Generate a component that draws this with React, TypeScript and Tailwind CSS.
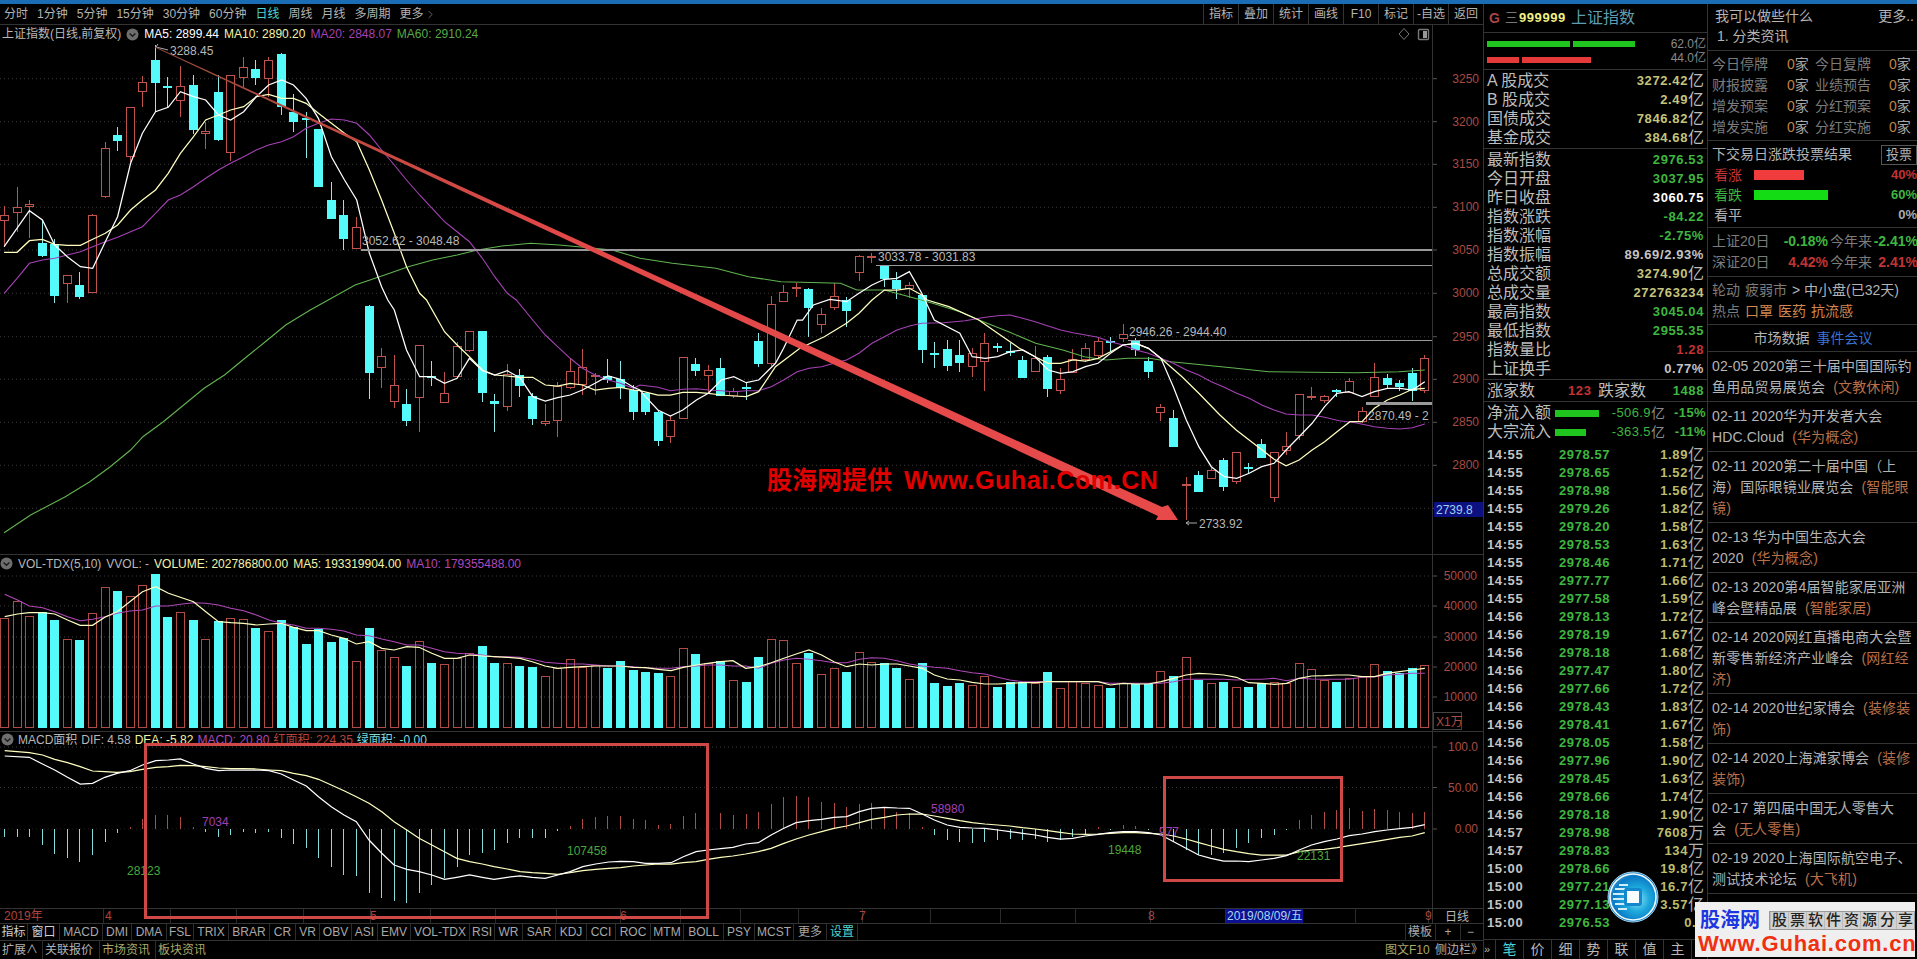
import React from 'react';
import { ChevronRight } from 'lucide-react';

// helper: turn points read from zoomed crops into page coordinates
const pts = (x0: number, sx: number, y0: number, raw: string) =>
  raw
    .trim()
    .split(/\s+/)
    .map((p) => {
      const [x, y] = p.split(',').map(Number);
      return `${(x0 + x / sx).toFixed(1)},${(y0 + y / 3).toFixed(1)}`;
    })
    .join(' ');
const z1 = (s: string) => pts(0, 2.45, 0, s);
const z8 = (s: string) => pts(0, 2.45, 300, s);
const z2 = (s: string) => pts(640, 1.845, 0, s);
const z7 = (s: string) => pts(640, 1.845, 300, s);
const z5 = (s: string) => pts(0, 2.119, 540, s);
const z6 = (s: string) => pts(740, 2.119, 540, s);

const MA5 = [
  z1('10,740 72,632 104,660 134,735 165,770 197,800 227,805 258,725 288,650 320,490 349,400 381,335 412,322 442,275 474,290 504,300 535,345 565,360 597,335 628,290 658,255 690,240 719,255 750,295 780,355 812,470 844,540 874,600 905,760 935,860'),
  z8('950,0 966,30 996,150 1028,230 1059,230 1089,250 1120,235 1150,175 1182,212 1212,225 1243,212 1275,235 1305,290 1336,303 1366,293 1397,285 1427,270 1458,250 1490,228 1520,238 1552,262'),
  z7('0,270 10,290 33,330 56,348 79,330 104,300 126,280 150,240 173,230 196,248 219,240 250,190 265,145 290,60'),
  z2('300,960 320,915 350,898 381,905 404,880 428,855 451,838 474,835 497,815 520,880'),
  z7('543,60 590,100 613,170 637,175 660,170 683,155 706,150 729,170 753,210 776,220 799,215 822,200 845,190 868,160 891,135 915,130 938,145 961,175 984,260 1008,360 1031,440 1054,500 1078,530 1101,535 1124,520 1147,500 1170,490 1192,450 1216,410 1240,370 1263,320 1286,280 1308,275 1332,290 1355,275 1379,265 1402,265 1425,270 1448,245'),
].join(' ');

const MA10 = [
  z1('10,757 42,757 72,722 104,718 134,733 165,736 197,736 227,718 258,700 288,675 320,630 349,600 381,570 412,520 442,460 474,410 504,360 535,345 565,330 597,320 628,290 658,283 690,295 719,295 750,310 780,340 812,370 844,400 874,425 905,510 935,600 966,700 996,800 1028,880'),
  z8('1045,0 1089,95 1120,135 1150,170 1182,210 1212,225 1243,228 1275,232 1305,232 1336,255 1366,258 1397,250 1427,255 1458,270 1490,265 1520,262 1552,270'),
  z7('0,272 33,285 56,285 79,277 104,277 126,280 150,285 173,288 196,290 219,275 250,200 295,145 340,110 381,70 404,40 428,0'),
  z2('451,870 474,870 497,865 520,885'),
  z7('530,0 570,20 625,60 660,100 700,145 729,170 753,190 776,190 799,180 822,183 845,175 868,155 891,135 915,130 938,145 961,175 1000,230 1031,280 1070,345 1100,390 1140,440 1170,478 1192,497 1216,480 1240,450 1263,425 1290,390 1310,365 1332,365 1355,325 1379,300 1402,285 1425,268 1448,265'),
].join(' ');

const MA20 = [
  z1('10,880 42,835 72,790 104,780 134,775 165,765 197,755 227,740 258,725 288,712 320,695 349,680 381,640 412,600 442,585 474,560 504,535 535,510 565,490 597,470 628,450 658,435 690,425 719,410 750,385 780,370 812,357 844,360 874,370 905,405 935,450 966,495 996,540 1028,585 1059,625 1089,665 1120,695 1150,725 1182,775 1212,830 1243,880'),
  z8('1265,0 1305,60 1336,105 1366,140 1397,175 1427,205 1458,225 1490,240 1520,250 1552,265'),
  z7('0,255 33,262 56,272 79,268 104,266 126,270 150,272 173,275 196,272 219,272 242,260 265,240 290,215 312,205 335,200 358,190 381,180 404,160 428,130 451,110 474,90 497,78 520,70 560,68 600,62 637,52 660,47 683,45 706,55 729,65 753,78 776,90 799,98 822,105 845,112 868,125 891,135 915,150 938,160 961,175 984,190 1008,210 1031,225 1054,245 1078,262 1101,280 1124,295 1147,315 1170,330 1192,342 1216,345 1240,345 1263,352 1290,362 1320,368 1355,380 1379,385 1402,387 1425,383 1448,372'),
].join(' ');

const MA60 = [
  z8('10,698 75,645 160,590 220,545 270,500 320,450 350,410 400,365 450,315 500,265 550,225 600,175 650,125 700,75 760,30'),
  z1('790,910 870,855 930,830 1000,800 1060,780 1120,765 1170,750 1230,738 1300,730 1370,735 1430,742 1500,750 1568,775'),
  z2('60,790 140,805 200,830 260,845 370,850 400,870 451,870 497,890 540,910 590,935 625,960'),
  z7('680,95 730,130 780,150 820,170 860,180 900,175 940,175 980,185 1040,195 1100,205 1160,215 1240,217 1320,218 1400,215 1448,210'),
].join(' ');

const VOL_MA5 = [
  z5('10,230 37,222 62,218 90,218 116,222 143,240 170,256 196,256 222,232 248,215 275,185 302,155 330,140 357,160 382,172 410,185 436,215 463,245 489,248 516,250 543,255 570,252 596,250 622,262 649,272 675,272 702,285 729,295 755,312 782,305 809,325 835,330 862,320 888,322 915,340 942,355 968,355 995,345 1022,348 1047,350 1075,352 1102,355 1128,365 1155,378 1182,385 1208,382 1235,380 1262,378 1290,378 1315,378 1342,382 1368,383 1395,388 1422,392 1448,382 1475,375 1500,370 1527,365 1553,362'),
  z6('12,385 39,380 66,368 93,355 119,342 146,330 173,345 199,365 226,380 253,372 279,375 306,372 333,372 359,378 386,385 412,405 439,417 466,420 492,427 519,432 546,432 572,430 599,428 626,428 652,425 679,425 705,425 732,425 759,425 785,435 812,430 839,432 865,432 892,425 919,415 945,405 972,400 998,402 1025,405 1052,412 1078,428 1105,430 1132,433 1158,430 1185,415 1211,408 1238,407 1265,405 1291,405 1318,410 1345,410 1371,400 1398,395 1424,390 1451,385'),
].join(' ');

const VOL_MA10 = [
  z5('10,163 37,180 62,198 90,203 116,215 143,230 170,242 196,238 222,230 248,220 275,213 302,210 330,198 357,198 382,193 410,188 436,190 463,195 489,205 516,212 543,225 570,240 596,250 622,255 649,265 675,265 702,268 729,273 755,285 782,287 809,297 835,305 862,315 888,315 915,325 942,335 968,340 995,342 1022,345 1047,350 1075,350 1102,352 1128,358 1155,367 1182,370 1208,372 1235,372 1262,375 1290,378 1315,378 1342,380 1368,383 1395,385 1422,385 1448,380 1475,378 1500,375 1527,375 1553,378'),
  z6('12,378 39,385 66,370 93,360 119,355 146,358 173,362 199,368 226,368 253,358 279,353 306,355 333,362 359,372 386,378 412,382 439,385 466,392 492,398 519,402 546,412 572,420 599,425 626,425 652,425 679,425 705,425 732,425 759,425 785,430 812,430 839,430 865,430 892,430 919,425 945,418 972,418 998,418 1025,418 1052,420 1078,418 1105,418 1132,415 1158,422 1185,415 1211,417 1238,418 1265,418 1291,418 1318,412 1345,410 1371,405 1398,403 1424,400 1451,400'),
].join(' ');

const DIF = [
  z5('10,648 62,652 90,672 116,690 143,712 170,732 196,730 222,712 248,700 275,692 302,675 330,662 357,660 382,657 410,672 436,685 463,692 489,690 516,690 543,690 570,692 596,702 622,720 649,738 675,770 702,800 729,825 755,845 782,900 809,940 835,975 862,988 888,995 915,1005 942,1018 968,1012 995,1005 1022,1012 1047,1018 1075,1012 1102,1008 1128,1012 1155,1015 1182,1005 1208,995 1235,980 1262,972 1290,966 1315,964 1342,965 1368,970 1395,970 1422,968 1448,950 1475,935 1500,930 1527,926 1553,922'),
  z6('12,912 39,908 66,885 93,865 119,848 146,842 173,838 199,832 226,830 253,815 279,805 306,802 333,804 359,805 386,822 412,840 439,855 466,862 492,864 519,865 546,870 572,875 599,880 626,885 652,892 679,897 705,895 732,888 759,883 785,878 812,875 839,875 865,878 892,885 919,905 945,925 972,945 998,955 1025,963 1052,963 1078,965 1105,960 1132,955 1158,947 1185,930 1211,915 1238,905 1265,897 1291,887 1318,882 1345,875 1371,870 1398,866 1424,862 1451,854'),
].join(' ');

const DEA = [
  z5('10,632 62,638 90,645 116,658 143,668 170,680 196,693 222,695 248,697 275,695 302,688 330,682 357,680 382,676 410,677 436,680 463,684 489,686 516,686 543,687 570,690 596,692 622,700 649,707 675,718 702,735 729,752 755,770 782,790 809,815 835,845 862,870 888,895 915,915 942,935 968,955 995,965 1022,972 1047,980 1075,987 1102,995 1128,998 1155,1000 1182,1003 1208,998 1235,992 1262,988 1290,985 1315,983 1342,978 1368,975 1395,972 1422,972 1448,968 1475,965 1500,958 1527,952 1553,948'),
  z6('12,942 39,935 66,925 93,910 119,897 146,885 173,875 199,865 226,858 253,848 279,838 306,832 333,825 359,822 386,822 412,828 439,835 466,842 492,848 519,852 546,855 572,858 599,863 626,867 652,872 679,877 705,882 732,883 759,882 785,880 812,878 839,878 865,880 892,882 919,888 945,897 972,908 998,918 1025,928 1052,935 1078,941 1105,945 1132,945 1158,945 1185,935 1211,930 1238,928 1265,923 1291,917 1345,905 1398,892 1424,888 1451,878'),
].join(' ');

// wick top, body top, body bottom, wick bottom, 1 = falling (cyan)
const CANDLES: number[][] = [
  [206,215,221,247,0],[187,207,213,232,0],[200,204,207,238,0],[220,243,256,257,1],[239,244,296,303,1],[275,275,284,303,0],
  [272,285,297,299,1],[214,215,293,293,0],[142,148,197,198,0],[127,135,141,151,1],[107,107,157,162,0],[76,82,92,107,0],
  [45,60,83,112,1],[77,86,87,108,1],[66,86,101,117,0],[75,85,130,134,1],[122,131,134,149,0],[75,92,140,141,1],
  [75,75,153,161,0],[57,67,78,87,0],[60,69,78,85,1],[57,60,79,97,0],[53,54,107,115,1],[94,112,122,132,1],
  [112,118,119,158,1],[129,129,187,187,1],[182,200,219,219,1],[200,215,239,250,1],[217,227,249,249,0],[305,306,373,399,1],
  [348,356,368,388,0],[355,385,402,408,0],[389,404,421,426,1],[345,345,398,432,0],[361,376,377,386,1],[372,393,403,403,0],
  [342,346,377,378,0],[331,331,351,352,0],[331,331,393,402,1],[394,401,404,432,1],[364,374,407,411,0],[369,375,386,397,1],
  [393,396,419,425,1],[404,421,424,426,0],[382,386,421,437,0],[358,371,388,389,0],[349,367,385,395,0],[373,375,377,395,0],
  [359,376,380,383,1],[361,379,388,399,1],[385,390,412,420,1],[393,393,412,415,1],[410,412,441,446,1],[416,420,437,443,0],
  [357,357,419,419,0],[358,364,371,376,1],[365,370,376,392,0],[358,368,396,396,1],[388,391,396,398,0],[382,387,388,400,1],
  [333,341,364,367,1],[296,304,364,366,0],[285,292,302,302,0],[283,287,289,297,0],[288,289,308,337,1],[308,314,325,333,0],
  [283,296,308,310,0],[297,300,311,327,1],[255,256,273,281,0],[253,256,258,263,0],[265,266,279,287,1],[272,280,289,299,1],
  [282,285,289,298,0],[295,295,350,363,1],[342,353,354,368,1],[340,349,366,371,1],[340,355,363,372,1],[348,353,367,377,0],
  [333,343,362,391,0],[343,346,347,352,1],[343,351,352,356,1],[356,360,378,378,1],[346,358,372,372,0],[355,357,389,397,1],
  [368,379,391,394,0],[349,359,373,373,0],[343,348,360,362,0],[337,341,356,358,0],[337,341,343,352,1],[324,334,339,342,0],
  [338,341,350,356,1],[357,361,372,378,1],[404,407,413,421,0],[410,418,447,447,1],[477,484,486,520,0],[471,475,492,492,1],
  [468,470,479,479,0],[458,460,487,491,1],[452,452,482,484,0],[463,467,468,473,1],[439,444,458,458,1],[452,452,498,502,0],
  [432,446,451,455,0],[394,394,436,440,0],[387,396,398,400,0],[395,396,401,403,0],[389,390,392,397,1],[378,381,393,393,0],
  [407,411,422,423,0],[363,377,397,397,0],[374,378,385,388,1],[380,383,387,391,1],[368,373,391,401,1],[355,358,391,393,0],
];

const VOL_TOPS = [
  235,183,228,215,240,298,300,220,140,153,168,135,102,232,217,240,298,243,235,238,264,273,240,262,312,267,305,294,362,264,
  330,352,378,303,369,373,355,338,318,369,370,378,380,408,385,358,380,375,384,363,390,396,400,408,325,342,370,363,420,
  426,351,298,300,370,338,403,385,396,335,367,370,384,418,370,429,438,429,436,408,440,427,427,430,396,445,423,430,436,443,
  430,433,433,393,408,352,420,428,427,442,441,430,425,430,368,388,420,426,415,407,373,394,398,385,376,
];

const MACD_ENDS = [
  890,890,890,915,943,955,967,945,905,878,860,838,824,825,832,860,875,890,885,875,878,875,895,912,925,955,982,1005,1008,1060,
  1075,1083,1090,1060,1035,1015,980,945,940,930,910,895,895,893,872,858,838,830,828,828,836,840,855,853,828,820,866,820,825,
  822,815,792,772,768,772,785,788,800,793,790,805,815,818,862,885,900,905,908,905,900,897,900,897,905,900,890,885,862,870,
  855,858,870,862,905,930,945,945,940,925,910,895,885,870,840,825,815,810,805,812,808,810,815,820,815,
];

const barX = (i: number) => Math.round(4 + 12.57 * i);

const PRICE_GRID = [
  [3250, 78.7], [3200, 121.7], [3150, 164.3], [3100, 207.3], [3050, 250], [3000, 293.3],
  [2950, 336.7], [2900, 379.3], [2850, 422.3], [2800, 465.3], [2750, 508.3],
];
const VOL_GRID = [[50000, 576], [40000, 606], [30000, 637], [20000, 667], [10000, 697]];

const CandleChart = () => (
  <svg className="absolute inset-0 w-[1483px] h-[529px]" viewBox="0 25 1483 529" fontFamily="'Liberation Sans', sans-serif">
    <defs>
      <linearGradient id="arrowFade" gradientUnits="userSpaceOnUse" x1="155" y1="47" x2="1178" y2="520">
        <stop offset="0" stopColor="#8f4a3c" />
        <stop offset="0.15" stopColor="#bb4a40" />
        <stop offset="0.4" stopColor="#e24848" />
        <stop offset="1" stopColor="#e84a4a" />
      </linearGradient>
    </defs>
    {PRICE_GRID.map(([p, y]) => (
      <g key={p}>
        <line x1="0" x2="1432" y1={y} y2={y} stroke="#3a3a3a" strokeDasharray="1 3" />
        <line x1="1432" x2="1437" y1={y} y2={y} stroke="#555" />
        {p !== 2750 && (
          <text x="1479" y={y + 4} textAnchor="end" fontSize="12" fill="#a84c44">{p}</text>
        )}
      </g>
    ))}
    <line x1="1432.5" x2="1432.5" y1="25" y2="554" stroke="#333" />

    {CANDLES.map((c, i) => {
      const x = barX(i);
      const color = c[4] ? '#55fbfb' : '#c0544c';
      return (
        <g key={i} shapeRendering="crispEdges">
          <line x1={x + 0.5} x2={x + 0.5} y1={c[0]} y2={c[3]} stroke={c[4] ? '#8fe8e8' : color} />
          {c[4] ? (
            <rect x={x - 4} y={c[1]} width="9" height={Math.max(c[2] - c[1], 2)} fill={color} />
          ) : (
            <rect x={x - 3.5} y={c[1] + 0.5} width="8" height={Math.max(c[2] - c[1] - 1, 1)} fill="#000" stroke={color} />
          )}
        </g>
      );
    })}

    <polyline points={MA60} fill="none" stroke="#62b450" strokeWidth="1.1" />
    <polyline points={MA20} fill="none" stroke="#a542b5" strokeWidth="1.1" />
    <polyline points={MA10} fill="none" stroke="#ffffc0" strokeWidth="1.25" />
    <polyline points={MA5} fill="none" stroke="#ffffff" strokeWidth="1.25" />

    <rect x="361" y="249" width="1071" height="2" fill="#999" />
    <rect x="876" y="265" width="556" height="1" fill="#999" />
    <rect x="1128" y="340" width="304" height="1" fill="#999" />
    <rect x="1366" y="402" width="66" height="3" fill="#999" />

    <text x="170" y="55" fontSize="12" fill="#b8b8b8">3288.45</text>
    <path d="M168 50 L156 47 M156 47 l2 -3" stroke="#aaa" fill="none" />
    <text x="362" y="245" fontSize="12" fill="#b8b8b8">3052.62 - 3048.48</text>
    <text x="878" y="261" fontSize="12" fill="#b8b8b8">3033.78 - 3031.83</text>
    <text x="1129" y="336" fontSize="12" fill="#b8b8b8">2946.26 - 2944.40</text>
    <text x="1368" y="420" fontSize="12" fill="#b8b8b8">2870.49 - 2</text>
    <text x="1199" y="528" fontSize="12" fill="#b8b8b8">2733.92</text>
    <path d="M1197 523 H1186 M1186 523 l3 -2 M1186 523 l3 2" stroke="#aaa" fill="none" />

    <polygon
      points="155,46.6 1162,507 1168,505 1178,520 1156,520 1158,516 155,47.6"
      fill="url(#arrowFade)"
    />

    <rect x="1434" y="502" width="49" height="15" fill="#0d1080" />
    <text x="1436" y="514" fontSize="12" fill="#9fd0ef">2739.8</text>

    <path d="M1404 28.5 L1409 34 L1404 39.5 L1399 34 Z" fill="none" stroke="#777" />
    <rect x="1418.5" y="29.5" width="10" height="10" rx="1" fill="none" stroke="#777" strokeWidth="1.4" />
    <rect x="1423" y="31" width="4" height="7" fill="#999" />

    <text
      x="767"
      y="489"
      fontSize="25"
      fontWeight="700"
      fill="#e00000"
      fontFamily="'Noto Sans CJK SC', sans-serif"
    >
      股海网提供
      <tspan x="904" fontSize="25" fontFamily="'Liberation Sans', sans-serif" letterSpacing="0.6">Www.Guhai.Com.CN</tspan>
    </text>
  </svg>
);

const VolumeChart = () => (
  <svg className="absolute inset-0 w-[1483px] h-[176px]" viewBox="0 555 1483 176" fontFamily="'Liberation Sans', sans-serif">
    {VOL_GRID.map(([v, y]) => (
      <g key={v}>
        <line x1="0" x2="1432" y1={y} y2={y} stroke="#3a3a3a" strokeDasharray="1 3" />
        <line x1="1432" x2="1437" y1={y} y2={y} stroke="#555" />
        <text x="1477" y={y + 4} textAnchor="end" fontSize="12" fill="#a84c44">{v}</text>
      </g>
    ))}
    <line x1="1432.5" x2="1432.5" y1="555" y2="731" stroke="#333" />
    {VOL_TOPS.map((z, i) => {
      const x = barX(i);
      const top = Math.round(540 + z / 3);
      return CANDLES[i][4] ? (
        <rect key={i} x={x - 4} y={top} width="9" height={728 - top} fill="#55fbfb" shapeRendering="crispEdges" />
      ) : (
        <rect key={i} x={x - 3.5} y={top + 0.5} width="8" height={727 - top} fill="none" stroke="#b04c44" shapeRendering="crispEdges" />
      );
    })}
    <polyline points={VOL_MA10} fill="none" stroke="#b048b8" strokeWidth="1.1" />
    <polyline points={VOL_MA5} fill="none" stroke="#ffffc0" strokeWidth="1.2" />
    <rect x="1433.5" y="712.5" width="28" height="17" fill="none" stroke="#444" />
    <text x="1436" y="726" fontSize="12" fill="#a84c44" fontFamily="'Liberation Sans', 'Noto Sans CJK SC', sans-serif">X1万</text>
  </svg>
);

const MacdChart = () => (
  <svg className="absolute inset-0 w-[1483px] h-[176px]" viewBox="0 732 1483 176" fontFamily="'Liberation Sans', sans-serif">
    {[[747, '100.0'], [787.5, '50.00'], [829, '0.00']].map(([y, label]) => (
      <g key={label as string}>
        <line x1="0" x2="1432" y1={y as number} y2={y as number} stroke={label === '50.00' || label === '100.0' ? '#3a3a3a' : '#1c1c1c'} strokeDasharray="1 3" />
        <line x1="1432" x2="1437" y1={y as number} y2={y as number} stroke="#555" />
        <text x="1478" y={(y as number) + 4} textAnchor="end" fontSize="12" fill="#a84c44">{label}</text>
      </g>
    ))}
    <line x1="1432.5" x2="1432.5" y1="732" y2="908" stroke="#333" />
    {MACD_ENDS.map((z, i) => {
      const x = barX(i) + 0.5;
      const y = 540 + z / 3;
      return <line key={i} x1={x} x2={x} y1="828.7" y2={y} stroke={z < 866 ? '#b04c44' : '#86dcdc'} shapeRendering="crispEdges" />;
    })}
    <polyline points={DEA} fill="none" stroke="#ffffc0" strokeWidth="1.25" />
    <polyline points={DIF} fill="none" stroke="#ffffff" strokeWidth="1.25" />
    <text x="127" y="875" fontSize="12" fill="#4aa63c">28123</text>
    <text x="202" y="826" fontSize="12" fill="#a040b0">7034</text>
    <text x="567" y="855" fontSize="12" fill="#4aa63c">107458</text>
    <text x="931" y="813" fontSize="12" fill="#a040b0">58980</text>
    <text x="1108" y="854" fontSize="12" fill="#4aa63c">19448</text>
    <text x="1297" y="860" fontSize="12" fill="#4aa63c">22131</text>
    <text x="1159" y="836" fontSize="12" fill="#a040b0">977</text>
  </svg>
);

const DateAxis = () => (
  <svg className="absolute inset-0 w-[1483px] h-[14px]" viewBox="0 909 1483 14" fontFamily="'Liberation Sans', 'Noto Sans CJK SC', sans-serif">
    {[103, 170, 236, 303, 370, 430, 495, 556, 620, 680, 740, 798, 862, 930, 1000, 1075, 1150, 1225, 1355, 1428].map((x) => (
      <line key={x} x1={x + 0.5} x2={x + 0.5} y1="909" y2="923" stroke="#2a2a2a" />
    ))}
    <line x1="1432.5" x2="1432.5" y1="909" y2="923" stroke="#333" />
    <text x="4" y="920" fontSize="12" fill="#b0443c">2019年</text>
    <text x="105" y="920" fontSize="12" fill="#b0443c">4</text>
    <text x="370" y="920" fontSize="12" fill="#b0443c">5</text>
    <text x="620" y="920" fontSize="12" fill="#b0443c">6</text>
    <text x="859" y="920" fontSize="12" fill="#b0443c">7</text>
    <text x="1148" y="920" fontSize="12" fill="#b0443c">8</text>
    <text x="1425" y="920" fontSize="12" fill="#b0443c">9</text>
    <rect x="1226" y="909" width="77" height="14" fill="#0d1090" />
    <text x="1227" y="920" fontSize="12" fill="#a8d8f0">2019/08/09/五</text>
    <text x="1445" y="921" fontSize="12" fill="#b8b8b8">日线</text>
  </svg>
);

const Chevron = () => (
  <svg width="13" height="13" viewBox="0 0 13 13" className="shrink-0">
    <circle cx="6.5" cy="6.5" r="6" fill="#6e6e6e" />
    <path d="M3.6 5.4 L6.5 8.3 L9.4 5.4" fill="none" stroke="#1c1c1c" strokeWidth="1.4" />
  </svg>
);

const TOOLBAR = ['分时', '1分钟', '5分钟', '15分钟', '30分钟', '60分钟', '日线', '周线', '月线', '多周期'];
const TOOLS = ['指标', '叠加', '统计', '画线', 'F10', '标记', '-自选', '返回'];

const Toolbar = () => (
  <div className="flex h-[21px] items-center border-b border-[#333] pl-[4px] text-[12px] text-[#b4b4b4]">
    <div className="flex items-center gap-[9px]">
      {TOOLBAR.map((t) => (
        <span key={t} className={t === '日线' ? 'text-[#4fd4d4]' : ''}>{t}</span>
      ))}
      <span className="flex items-center">更多<ChevronRight size={13} strokeWidth={1} /></span>
    </div>
    <div className="ml-auto flex h-full">
      {TOOLS.map((t) => (
        <span key={t} className="flex w-[35px] items-center justify-center border-l border-[#333]">{t}</span>
      ))}
    </div>
  </div>
);

const FORMULAS: [string, number][] = [
  ['指标', 28], ['窗口', 32], ['MACD', 43], ['DMI', 29], ['DMA', 35], ['FSL', 27], ['TRIX', 35], ['BRAR', 41], ['CR', 26],
  ['VR', 24], ['OBV', 32], ['ASI', 26], ['EMV', 33], ['VOL-TDX', 59], ['RSI', 25], ['WR', 28], ['SAR', 33], ['KDJ', 31],
  ['CCI', 29], ['ROC', 35], ['MTM', 33], ['BOLL', 40], ['PSY', 31], ['MCST', 39], ['更多', 33], ['设置', 31],
];

const FormulaTabs = () => (
  <div className="flex h-[17px] items-center border-t border-[#333] text-[12px] text-[#a8a8a8]">
    {FORMULAS.map(([t, w]) => (
      <span
        key={t}
        className={`flex h-full shrink-0 items-center justify-center border-r border-[#2c2c2c] ${
          t === '设置' ? 'text-[#4fd4d4]' : t === '指标' || t === '窗口' ? 'text-[#d0d0d0]' : ''
        }`}
        style={{ width: w }}
      >
        {t}
      </span>
    ))}
    <div className="ml-auto flex h-full items-center pr-[3px]">
      <span className="w-[30px] border-l border-[#2c2c2c] pl-[2px]">模板</span>
      <span className="w-[25px] border-l border-[#2c2c2c] text-center">+</span>
      <span className="w-[20px] border-l border-[#2c2c2c] text-center">−</span>
    </div>
  </div>
);

const BottomTabs = () => (
  <div className="flex h-[19px] items-center border-t border-[#333] pl-[2px] text-[12px] text-[#b0b0b0]">
    <span className="w-[41px] border-r border-[#2c2c2c]">扩展∧</span>
    <span className="w-[57px] pl-[2px] border-r border-[#2c2c2c]">关联报价</span>
    <span className="w-[56px] pl-[2px] border-r border-[#2c2c2c] text-[#a8a86c]">市场资讯</span>
    <span className="w-[56px] pl-[2px] text-[#a8a86c]">板块资讯</span>
    <span className="ml-auto w-[50px] text-[#a8a86c]">图文F10</span>
    <span className="w-[48px]">侧边栏》</span>
  </div>
);

const STATS1: [string, string, string][] = [
  ['A 股成交', '3272.42', '亿'],
  ['B 股成交', '2.49', '亿'],
  ['国债成交', '7846.82', '亿'],
  ['基金成交', '384.68', '亿'],
];

const GREEN = 'text-[#3fb63f]';
const PALE = 'text-[#c4c47c]';
const GRAY = 'text-[#c4c4c4]';

const STATS2: [string, string, string, string?][] = [
  ['最新指数', '2976.53', GREEN],
  ['今日开盘', '3037.95', GREEN],
  ['昨日收盘', '3060.75', 'text-white'],
  ['指数涨跌', '-84.22', GREEN],
  ['指数涨幅', '-2.75%', GREEN],
  ['指数振幅', '89.69/2.93%', GRAY],
  ['总成交额', '3274.90', PALE, '亿'],
  ['总成交量', '272763234', PALE],
  ['最高指数', '3045.04', GREEN],
  ['最低指数', '2955.35', GREEN],
  ['指数量比', '1.28', 'text-[#c03434]'],
  ['上证换手', '0.77%', GRAY],
];

const TICKS: [string, string, string, string][] = [
  ['14:55', '2978.57', '1.89', '亿'], ['14:55', '2978.65', '1.52', '亿'], ['14:55', '2978.98', '1.56', '亿'],
  ['14:55', '2979.26', '1.82', '亿'], ['14:55', '2978.20', '1.58', '亿'], ['14:55', '2978.53', '1.63', '亿'],
  ['14:55', '2978.46', '1.71', '亿'], ['14:55', '2977.77', '1.66', '亿'], ['14:55', '2977.58', '1.59', '亿'],
  ['14:56', '2978.13', '1.72', '亿'], ['14:56', '2978.19', '1.67', '亿'], ['14:56', '2978.18', '1.68', '亿'],
  ['14:56', '2977.47', '1.80', '亿'], ['14:56', '2977.66', '1.72', '亿'], ['14:56', '2978.43', '1.83', '亿'],
  ['14:56', '2978.41', '1.67', '亿'], ['14:56', '2978.05', '1.58', '亿'], ['14:56', '2977.96', '1.90', '亿'],
  ['14:56', '2978.45', '1.63', '亿'], ['14:56', '2978.66', '1.74', '亿'], ['14:56', '2978.18', '1.90', '亿'],
  ['14:57', '2978.98', '7608', '万'], ['14:57', '2978.83', '134', '万'], ['15:00', '2978.66', '19.8', '亿'],
  ['15:00', '2977.21', '16.7', '亿'], ['15:00', '2977.13', '3.57', '亿'], ['15:00', '2976.53', '0.0', ''],
];

const FOOT_TABS = ['笔', '价', '细', '势', '联', '值', '主', '筹'];

const QuotePanel = () => (
  <div className="flex w-[224px] shrink-0 flex-col border-r border-[#333]">
    <div className="flex h-[29px] items-center gap-[5px] border-b border-[#333] pl-[5px]">
      <span className="text-[14px] font-bold text-[#a84444]">G</span>
      <span className="-mr-[4px] text-[13px] text-[#777]">三</span>
      <span className="text-[13px] font-bold tracking-[0.6px] text-[#f0f084]">999999</span>
      <span className="text-[16px] text-[#5d9db3]">上证指数</span>
    </div>
    <div className="relative h-[37px] border-b border-[#333] text-[12px] text-[#8a8a8a]">
      <div className="flex h-[19px] items-center justify-between pl-[3px] pr-[1px] pt-[3px]">
        <div className="flex gap-[3px]">
          <span className="h-[6px] w-[83px] bg-[#1fc41f]" />
          <span className="h-[6px] w-[62px] bg-[#1fc41f]" />
        </div>
        <span>62.0亿</span>
      </div>
      <div className="flex h-[15px] items-center justify-between pl-[3px] pr-[1px]">
        <div className="flex gap-[3px]">
          <span className="h-[6px] w-[32px] bg-[#e63a3a]" />
          <span className="h-[6px] w-[69px] bg-[#e63a3a]" />
        </div>
        <span className="-mt-[3px]">44.0亿</span>
      </div>
    </div>
    <div className="flex h-[79px] flex-col justify-center border-b border-[#333] pl-[3px] pr-[3px]">
      {STATS1.map(([l, v, u]) => (
        <div key={l} className="flex h-[19px] items-center justify-between text-[16px] text-[#bdbdbd]">
          <span>{l}</span>
          <span className="flex items-center">
            <b className={`text-[13px] tracking-[0.6px] ${PALE}`}>{v}</b>
            <span>{u}</span>
          </span>
        </div>
      ))}
    </div>
    <div className="flex h-[231px] flex-col justify-center border-b border-[#333] pl-[3px] pr-[3px]">
      {STATS2.map(([l, v, c, u]) => (
        <div key={l} className="flex h-[19px] items-center justify-between text-[16px] text-[#bdbdbd]">
          <span>{l}</span>
          <span className="flex items-center">
            <b className={`text-[13px] tracking-[0.6px] ${c}`}>{v}</b>
            {u && <span>{u}</span>}
          </span>
        </div>
      ))}
    </div>
    <div className="flex h-[22px] items-center border-b border-[#333] pl-[3px] pr-[3px] text-[16px] text-[#bdbdbd]">
      <span className="w-[81px]">涨家数</span>
      <b className="w-[30px] text-[13px] tracking-[0.6px] text-[#c03434]">123</b>
      <span className="w-[50px]">跌家数</span>
      <b className={`flex-1 text-right text-[13px] tracking-[0.6px] ${GREEN}`}>1488</b>
    </div>
    <div className="flex h-[41px] flex-col justify-center pl-[3px] pr-[1px] text-[#bdbdbd]">
      {[['净流入额', 44, '-506.9', '-15%'], ['大宗流入', 31, '-363.5', '-11%']].map(([l, w, v, p]) => (
        <div key={l as string} className="flex h-[19px] items-center text-[16px]">
          <span className="w-[68px] shrink-0">{l}</span>
          <span className="w-[50px] shrink-0">
            <span className="block h-[7px] bg-[#1fc41f]" style={{ width: w as number }} />
          </span>
          <span className="flex w-[60px] shrink-0 items-center justify-end">
            <b className={`text-[13px] font-normal tracking-[0.4px] ${GREEN}`}>{v}</b>
            <span className="text-[14px] text-[#8a8a8a]">亿</span>
          </span>
          <b className={`flex-1 text-right text-[13px] tracking-[0.4px] ${GREEN}`}>{p}</b>
        </div>
      ))}
    </div>
    <div className="flex flex-col pl-[3px] pr-[3px] pt-[3px]">
      {TICKS.map(([t, p, v, u], i) => (
        <div key={i} className="flex h-[18px] items-center text-[13px] font-bold tracking-[0.6px]">
          <span className="w-[72px] text-[#c4c4c4]">{t}</span>
          <span className={GREEN}>{p}</span>
          <span className="ml-auto flex items-center">
            <span className="text-[#bcbc6c]">{v}</span>
            <span className="text-[16px] font-normal tracking-normal text-[#b0b0b0]">{u}</span>
          </span>
        </div>
      ))}
    </div>
    <div className="mt-auto flex h-[20px] items-center border-t border-[#333] text-[14px] text-[#b8b8b8]">
      <span className="w-[11px] shrink-0 text-[11px]">»</span>
      {FOOT_TABS.map((t, i) => (
        <span
          key={t}
          className={`flex h-full w-[28px] shrink-0 items-center justify-center border-l border-[#333] ${i === 0 ? 'text-[#4fd4d4]' : ''}`}
        >
          {t}
        </span>
      ))}
    </div>
  </div>
);

const COUNTS = [
  ['今日停牌', '今日复牌'],
  ['财报披露', '业绩预告'],
  ['增发预案', '分红预案'],
  ['增发实施', '分红实施'],
];

const NEWS: [string, string?][][] = [
  [['02-05 2020第三十届中国国际钓'], ['鱼用品贸易展览会', '(文教休闲)']],
  [['02-11 2020华为开发者大会'], ['HDC.Cloud', '(华为概念)']],
  [['02-11 2020第二十届中国（上'], ['海）国际眼镜业展览会', '(智能眼'], ['', '镜)']],
  [['02-13 华为中国生态大会'], ['2020', '(华为概念)']],
  [['02-13 2020第4届智能家居亚洲'], ['峰会暨精品展', '(智能家居)']],
  [['02-14 2020网红直播电商大会暨'], ['新零售新经济产业峰会', '(网红经'], ['', '济)']],
  [['02-14 2020世纪家博会', '(装修装'], ['', '饰)']],
  [['02-14 2020上海滩家博会', '(装修'], ['', '装饰)']],
  [['02-17 第四届中国无人零售大'], ['会', '(无人零售)']],
  [['02-19 2020上海国际航空电子、'], ['测试技术论坛', '(大飞机)']],
];

const InfoPanel = () => (
  <div className="flex w-[210px] shrink-0 flex-col text-[14px] text-[#b4b4b4]">
    <div className="h-[47px] border-b border-[#333] pl-[7px] pr-[4px]">
      <div className="flex h-[22px] items-center justify-between pt-[2px]">
        <span>我可以做些什么</span>
        <span>更多..</span>
      </div>
      <div className="flex h-[21px] items-center pl-[2px]">1. 分类资讯</div>
    </div>
    <div className="flex h-[90px] flex-col justify-center border-b border-[#333] pl-[4px]">
      {COUNTS.map(([a, b]) => (
        <div key={a} className="grid h-[21px] grid-cols-[75px_28px_74px_28px] items-center text-[#7c7c7c]">
          <span>{a}</span>
          <span className="text-[#a8a8a8]"><span className="text-[#c08040]">0</span>家</span>
          <span>{b}</span>
          <span className="text-[#a8a8a8]"><span className="text-[#c08040]">0</span>家</span>
        </div>
      ))}
    </div>
    <div className="h-[87px] border-b border-[#333] pl-[4px]">
      <div className="flex h-[24px] items-center justify-between pt-[3px]">
        <span>下交易日涨跌投票结果</span>
        <span className="mr-[1px] flex h-[20px] w-[36px] items-center justify-center border border-[#555] text-[13px]">投票</span>
      </div>
      <div className="flex h-[20px] items-center pl-[2px]">
        <span className="w-[40px] text-[#c83434]">看涨</span>
        <span className="h-[10px] w-[50px] bg-[#f03c3c]" />
        <b className="ml-auto pr-[1px] text-[13px] text-[#c03434]">40%</b>
      </div>
      <div className="flex h-[20px] items-center pl-[2px]">
        <span className="w-[40px] text-[#3fb63f]">看跌</span>
        <span className="h-[10px] w-[74px] bg-[#14dc14]" />
        <b className="ml-auto pr-[1px] text-[13px] text-[#3fb63f]">60%</b>
      </div>
      <div className="flex h-[20px] items-center pl-[2px]">
        <span className="w-[40px]">看平</span>
        <b className="ml-auto pr-[1px] text-[13px] text-[#aaa]">0%</b>
      </div>
    </div>
    <div className="flex h-[49px] flex-col justify-center border-b border-[#333] pl-[4px]">
      <div className="grid h-[21px] grid-cols-[62px_54px_44px_1fr] items-center text-[#7c7c7c]">
        <span>上证20日</span>
        <b className="text-right text-[14px] text-[#3fb63f]">-0.18%</b>
        <span className="pl-[2px]">今年来</span>
        <b className="text-right text-[14px] text-[#3fb63f]">-2.41%</b>
      </div>
      <div className="grid h-[21px] grid-cols-[62px_54px_44px_1fr] items-center text-[#7c7c7c]">
        <span>深证20日</span>
        <b className="text-right text-[14px] text-[#c03434]">4.42%</b>
        <span className="pl-[2px]">今年来</span>
        <b className="text-right text-[14px] text-[#c03434]">2.41%</b>
      </div>
    </div>
    <div className="flex h-[48px] flex-col justify-center border-b border-[#333] pl-[4px]">
      <div className="flex h-[21px] items-center gap-[5px] text-[#7c7c7c]">
        <span>轮动</span><span>疲弱市</span><span className="text-[#b4b4b4]">&gt; 中小盘(已32天)</span>
      </div>
      <div className="flex h-[21px] items-center gap-[5px] text-[#7c7c7c]">
        <span>热点</span>
        <span className="text-[#d08850]">口罩</span>
        <span className="text-[#d08850]">医药</span>
        <span className="text-[#d08850]">抗流感</span>
      </div>
    </div>
    <div className="flex h-[27px] items-center justify-center gap-[7px] border-b border-[#333]">
      <span>市场数据</span>
      <span className="text-[#3a72d4]">事件会议</span>
    </div>
    {NEWS.map((item, i) => (
      <div key={i} className="border-b border-[#333] pb-[3px] pl-[4px] pt-[4px] tracking-[0.15px]">
        {item.map(([txt, tag], j) => (
          <div key={j} className="flex h-[21px] items-center gap-[8px] whitespace-nowrap">
            {txt && <span>{txt}</span>}
            {tag && <span className="text-[#b8704a]">{tag}</span>}
          </div>
        ))}
      </div>
    ))}
  </div>
);

const CoinLogo = () => (
  <svg width="52" height="52" viewBox="0 0 52 52" className="absolute left-[1607px] top-[871px]">
    <defs>
      <radialGradient id="coinDisc" cx="0.58" cy="0.55" r="0.55">
        <stop offset="0" stopColor="#8fe4f6" />
        <stop offset="0.45" stopColor="#1ca8dc" />
        <stop offset="0.85" stopColor="#0c78c4" />
        <stop offset="1" stopColor="#2c90d0" />
      </radialGradient>
    </defs>
    <circle cx="26" cy="26" r="25" fill="url(#coinDisc)" stroke="#9fd0ee" />
    <circle cx="26" cy="26" r="23" fill="none" stroke="#f0fbff" strokeWidth="1.6" />
    <path d="M8 18 H18 M6 23 H17 M6 28 H17 M8 33 H18 M11 38 H20 M12 14 H21" stroke="#cfeefa" strokeWidth="2" />
    <rect x="17" y="17" width="18" height="18" rx="3" fill="#1488cc" />
    <rect x="20" y="20" width="12" height="12" fill="#f8fdff" />
  </svg>
);

const GuhaiBadge = () => (
  <div className="absolute left-[1695px] top-[902px] flex h-[55px] w-[220px] flex-col bg-[#efefef] pl-[3px]">
    <div className="flex h-[30px] items-center pt-[6px]">
      <span className="ml-[2px] text-[20px] font-bold leading-none text-[#1c36e0]">股海网</span>
      <div className="ml-[9px] flex border border-[#999] bg-[#d2d2d2]">
        {'股票软件资源分享'.split('').map((c) => (
          <span
            key={c}
            className="flex h-[17px] w-[18px] items-center justify-center border-l border-[#bbb] font-['Liberation_Serif','Noto_Sans_CJK_SC',serif] text-[15px] font-medium leading-none text-[#222]"
          >
            {c}
          </span>
        ))}
      </div>
    </div>
    <span className="mt-[1px] text-[22px] font-bold leading-[22px] tracking-[0.8px] text-[#f03010]">Www.Guhai.com.cn</span>
  </div>
);

export default function App() {
  return (
    <div className="relative h-[959px] w-[1917px] overflow-hidden bg-black font-['Liberation_Sans','Noto_Sans_CJK_SC',sans-serif]">
      <div className="h-[4px] bg-[#1a6cb4]" />
      <div className="flex h-[955px]">
        <div className="flex w-[1483px] shrink-0 flex-col border-r border-[#333] box-content">
          <Toolbar />
          <div className="relative h-[529px]">
            <CandleChart />
            <div className="relative flex h-[18px] items-center gap-[5px] pl-[2px] text-[12px]">
              <span className="text-[#b8b8b8]">上证指数(日线,前复权)</span>
              <Chevron />
              <span className="text-white">MA5: 2899.44</span>
              <span className="text-[#f4f4a8]">MA10: 2890.20</span>
              <span className="text-[#a542b5]">MA20: 2848.07</span>
              <span className="text-[#5aa84a]">MA60: 2910.24</span>
            </div>
          </div>
          <div className="relative h-[177px] border-t border-[#333]">
            <VolumeChart />
            <div className="relative flex h-[17px] items-center gap-[5px] text-[12px] text-[#b8b8b8]">
              <Chevron />
              <span>VOL-TDX(5,10)</span>
              <span>VVOL: -</span>
              <span className="text-[#f4f4a8]">VOLUME: 202786800.00</span>
              <span className="text-[#f4f4a8]">MA5: 193319904.00</span>
              <span className="text-[#b048b8]">MA10: 179355488.00</span>
            </div>
          </div>
          <div className="relative h-[177px] border-t border-[#333]">
            <MacdChart />
            <div className="relative flex h-[15px] items-center gap-[4px] pl-[1px] text-[12px] text-[#b8b8b8]">
              <Chevron />
              <span>MACD面积</span>
              <span>DIF: 4.58</span>
              <span className="text-[#f4f4a8]">DEA: -5.82</span>
              <span className="text-[#b048b8]">MACD: 20.80</span>
              <span className="text-[#b0443c]">红面积: 224.35</span>
              <span className="text-[#7fd8d8]">绿面积: -0.00</span>
            </div>
          </div>
          <div className="relative h-[15px] border-t border-[#333]">
            <DateAxis />
          </div>
          <FormulaTabs />
          <BottomTabs />
        </div>
        <QuotePanel />
        <InfoPanel />
      </div>

      <div className="absolute left-[144px] top-[743px] h-[176px] w-[565px] border-[3px] border-[#cf4848]" />
      <div className="absolute left-[1163px] top-[776px] h-[106px] w-[180px] border-[3px] border-[#cf4848]" />
      <CoinLogo />
      <GuhaiBadge />
    </div>
  );
}
